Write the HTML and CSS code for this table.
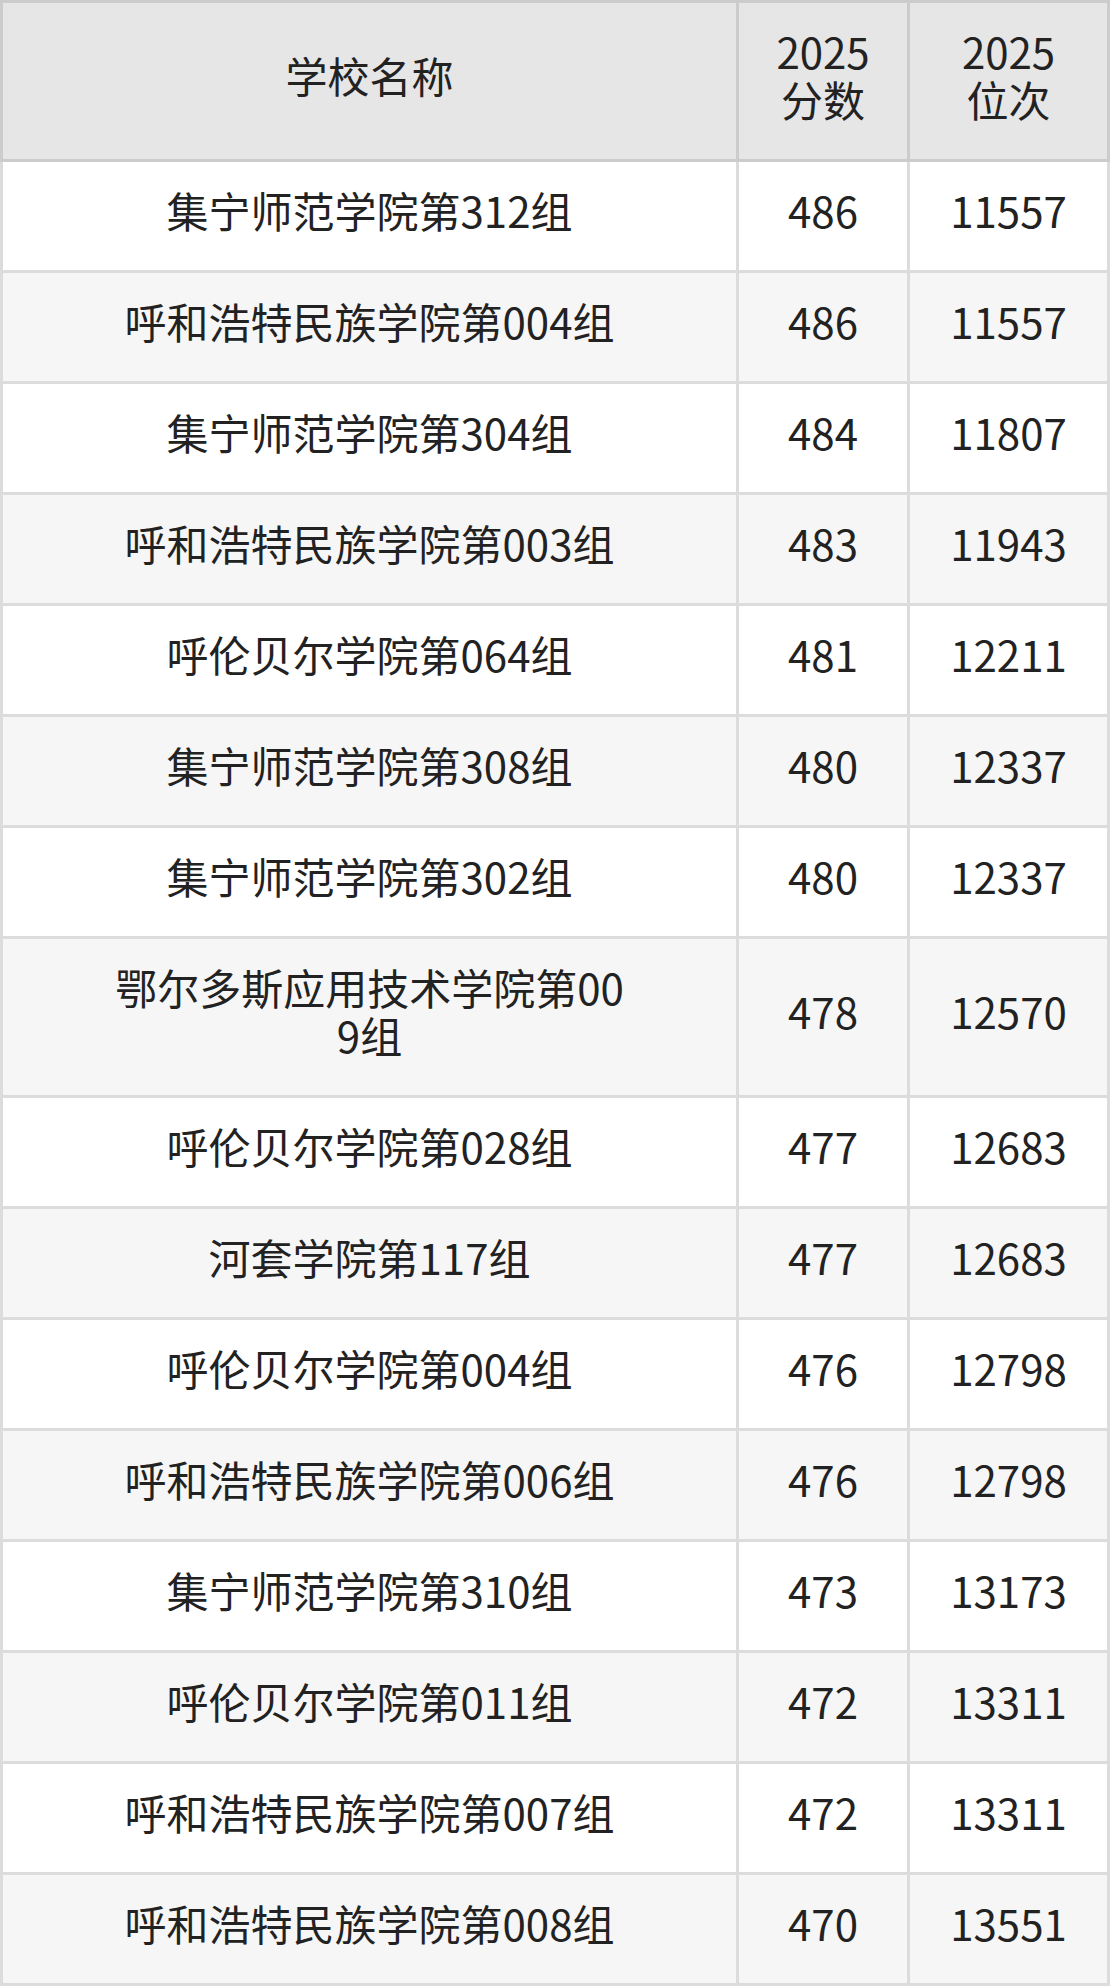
FILE: index.html
```html
<!DOCTYPE html>
<html lang="zh-CN">
<head>
<meta charset="utf-8">
<title>2025 分数位次</title>
<link rel="stylesheet" href="styles.css">
</head>
<body>
<table class="score-table">
  <colgroup>
    <col class="col-name">
    <col class="col-score">
    <col class="col-rank">
  </colgroup>
  <thead>
    <tr>
      <th>学校名称</th>
      <th>2025<br>分数</th>
      <th>2025<br>位次</th>
    </tr>
  </thead>
  <tbody>
    <tr><td class="name">集宁师范学院第312组</td><td>486</td><td>11557</td></tr>
    <tr><td class="name">呼和浩特民族学院第004组</td><td>486</td><td>11557</td></tr>
    <tr><td class="name">集宁师范学院第304组</td><td>484</td><td>11807</td></tr>
    <tr><td class="name">呼和浩特民族学院第003组</td><td>483</td><td>11943</td></tr>
    <tr><td class="name">呼伦贝尔学院第064组</td><td>481</td><td>12211</td></tr>
    <tr><td class="name">集宁师范学院第308组</td><td>480</td><td>12337</td></tr>
    <tr><td class="name">集宁师范学院第302组</td><td>480</td><td>12337</td></tr>
    <tr><td class="name">鄂尔多斯应用技术学院第009组</td><td>478</td><td>12570</td></tr>
    <tr><td class="name">呼伦贝尔学院第028组</td><td>477</td><td>12683</td></tr>
    <tr><td class="name">河套学院第117组</td><td>477</td><td>12683</td></tr>
    <tr><td class="name">呼伦贝尔学院第004组</td><td>476</td><td>12798</td></tr>
    <tr><td class="name">呼和浩特民族学院第006组</td><td>476</td><td>12798</td></tr>
    <tr><td class="name">集宁师范学院第310组</td><td>473</td><td>13173</td></tr>
    <tr><td class="name">呼伦贝尔学院第011组</td><td>472</td><td>13311</td></tr>
    <tr><td class="name">呼和浩特民族学院第007组</td><td>472</td><td>13311</td></tr>
    <tr><td class="name">呼和浩特民族学院第008组</td><td>470</td><td>13551</td></tr>
  </tbody>
</table>
</body>
</html>
```

FILE: styles.css
```css
html, body {
  margin: 0;
  padding: 0;
  background: #ffffff;
}

.score-table {
  width: 1110px;
  table-layout: fixed;
  border-collapse: collapse;
  border: 3px solid #dcdcdc;
  font-family: "Noto Sans CJK SC", "Noto Sans", sans-serif;
  font-size: 42px;
  line-height: 48px;
  color: #222222;
}

.col-name { width: 736px; }
.col-score { width: 171px; }

.score-table th,
.score-table td {
  padding: 24px 0 36px;
  text-align: center;
  vertical-align: middle;
  font-weight: normal;
}

.score-table th {
  background: #e6e6e6;
  border: 3px solid #cccccc;
}

.score-table td {
  border: 3px solid #dcdcdc;
}

.score-table td.name {
  padding-left: 108px;
  padding-right: 108px;
  word-break: break-all;
}

.score-table tbody tr:nth-child(even) td {
  background: #f6f6f6;
}
```
